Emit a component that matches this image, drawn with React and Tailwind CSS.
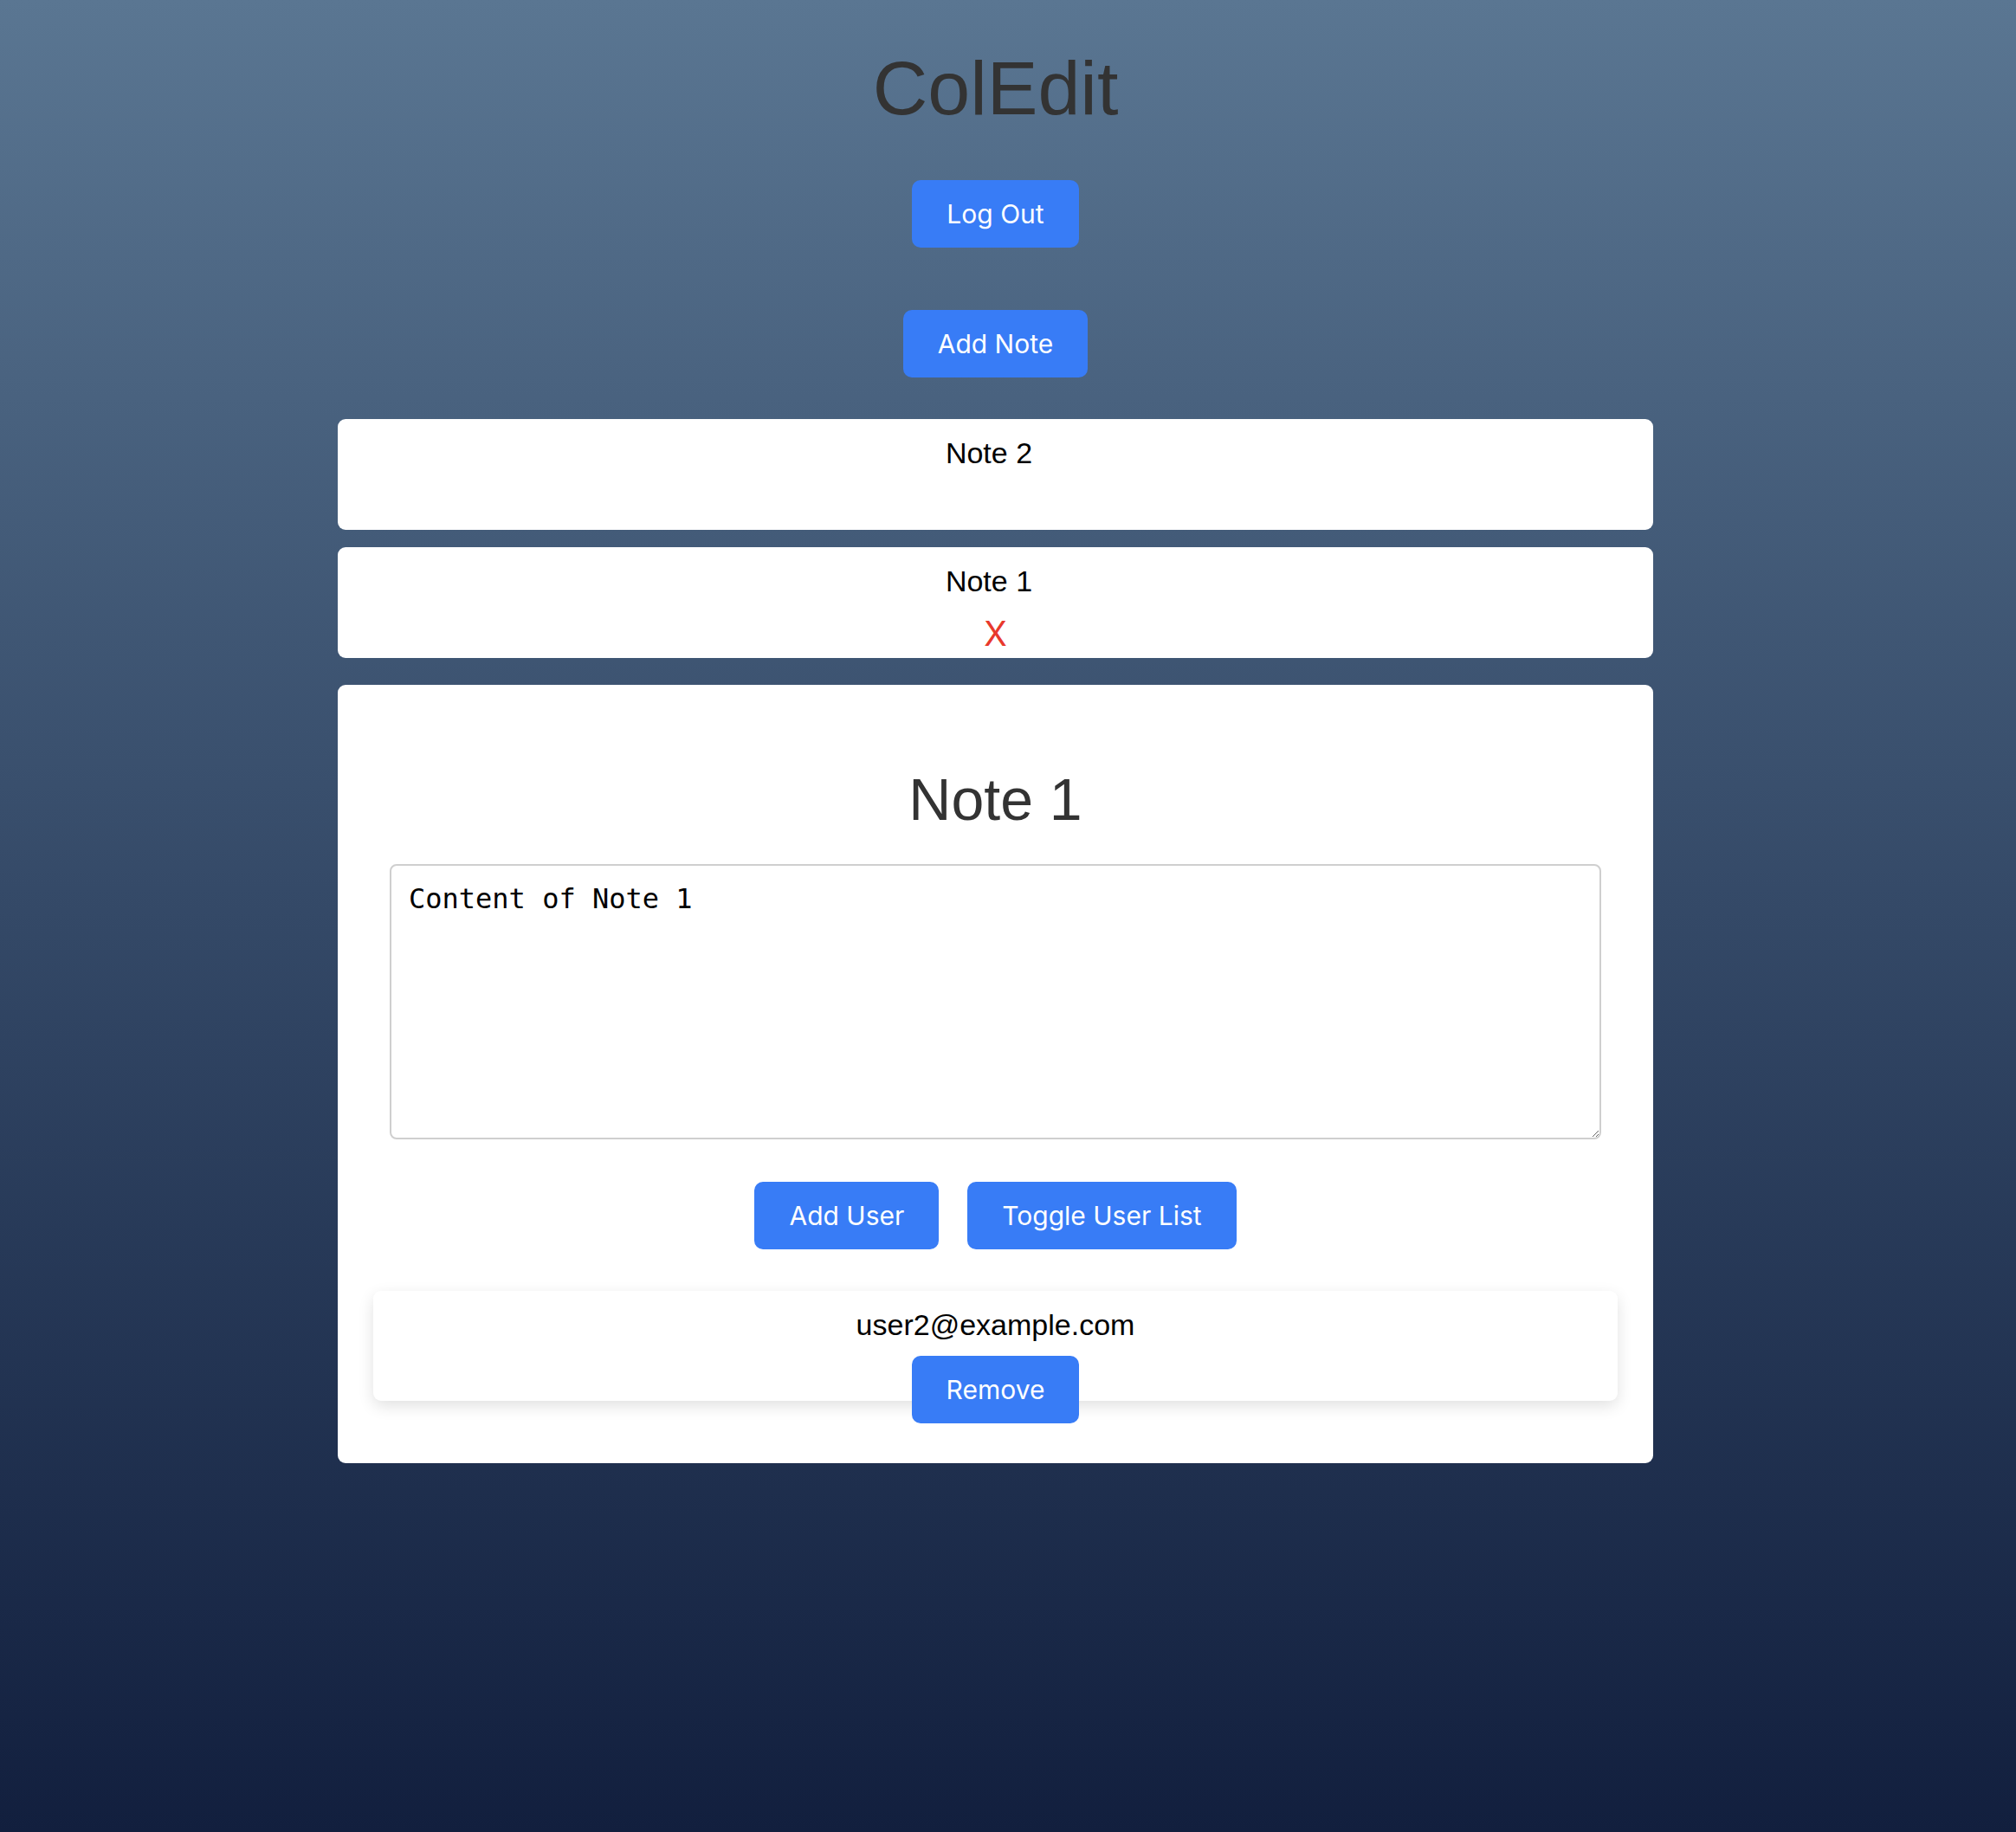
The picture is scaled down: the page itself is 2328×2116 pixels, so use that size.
import { useState } from 'react';

const notes = [
  { id: 2, title: 'Note 2' },
  { id: 1, title: 'Note 1' }
];

const users = ['user2@example.com'];

const btn =
  "flex h-[78px] shrink-0 items-center justify-center rounded-[10px] bg-[#387cf6] px-[40px] font-['Inter',sans-serif] text-[30px] leading-none text-white";

export default function App() {
  const [activeId, setActiveId] = useState(1);
  const [content, setContent] = useState('Content of Note 1');

  const active = notes.find((n) => n.id === activeId);

  return (
    <div className="min-h-screen bg-linear-to-b from-[#5a7692] to-[#121f3e] pr-[29px] pt-[58px] font-['Liberation_Sans',Arial,sans-serif]">
      <div className="flex flex-col items-center">
        <h1 className="text-[88px] leading-[88px] text-[#333]">ColEdit</h1>
        <button className={`${btn} mt-[62px]`}>Log Out</button>
        <button className={`${btn} mt-[72px]`}>Add Note</button>

        <div className="mt-[48px] flex w-[1519px] flex-col gap-[20px]">
          {notes.map((note) => (
            <div
              key={note.id}
              onClick={() => setActiveId(note.id)}
              className="flex h-[128px] cursor-pointer flex-col items-center rounded-[9px] bg-white pt-[22px]"
            >
              <h3 className="pr-[15px] text-[34px] leading-[34px] text-black">{note.title}</h3>
              <button
                className={`mt-[24px] font-['Inter',sans-serif] text-[39px] leading-[39px] text-[#e8392c] ${
                  note.id === activeId ? '' : 'invisible'
                }`}
              >
                X
              </button>
            </div>
          ))}
        </div>

        {active && (
          <div className="mt-[31px] w-[1519px] rounded-[9px] bg-white px-[41px] pt-[98px] pb-[72px]">
            <h2 className="text-center text-[68px] leading-[68px] text-[#333]">{active.title}</h2>
            <textarea
              value={content}
              onChange={(e) => setContent(e.target.value)}
              className="mx-[19px] mt-[41px] block h-[318px] w-[calc(100%-38px)] rounded-[8px] border-2 border-[#cfcfcf] pt-[20px] pb-[16px] pl-[20px] pr-[18px] font-['DejaVu_Sans_Mono',monospace] text-[32px] leading-[37px] text-black outline-none"
            />
            <div className="mt-[49px] flex justify-center gap-[33px]">
              <button className={btn}>Add User</button>
              <button className={btn}>Toggle User List</button>
            </div>
            {users.map((email) => (
              <div
                key={email}
                className="mt-[48px] flex h-[127px] flex-col items-center rounded-[9px] bg-white pt-[22px] shadow-[0_6px_18px_rgba(0,0,0,0.12)]"
              >
                <p className="text-[34px] leading-[34px] text-black">{email}</p>
                <button className={`${btn} mt-[19px]`}>Remove</button>
              </div>
            ))}
          </div>
        )}
      </div>
    </div>
  );
}
